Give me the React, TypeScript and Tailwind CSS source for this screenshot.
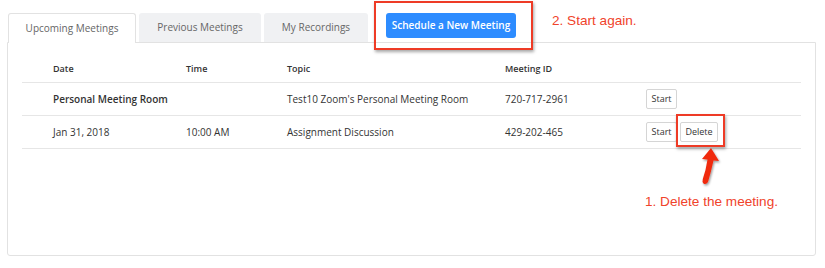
import React from "react";

const rows = [
  { date: "Personal Meeting Room", time: "", topic: "Test10 Zoom's Personal Meeting Room", id: "720-717-2961", bold: true, del: false },
  { date: "Jan 31, 2018", time: "10:00 AM", topic: "Assignment Discussion", id: "429-202-465", bold: false, del: true },
];

const cols = "grid grid-cols-[133px_101px_218px_141px_1fr] pl-[31px] items-center";

export default function App() {
  return (
    <div className="relative w-[825px] h-[268px] bg-white font-['Open_Sans',sans-serif] text-[#333]">
      {/* tabs */}
      <div className="flex items-start pt-[13px] pl-[8px] h-[43px]">
        <div className="w-[128px] h-[30px] bg-white border border-b-0 border-[#e2e2e2] rounded-t-[3px] flex items-center justify-center text-[10px] text-[#666] relative z-10">
          Upcoming Meetings
        </div>
        <div className="ml-[3px] w-[122px] h-[29px] bg-[#f0f1f3] rounded-t-[3px] flex items-center justify-center text-[10px] text-[#666]">
          Previous Meetings
        </div>
        <div className="ml-[3px] w-[104px] h-[29px] bg-[#f0f1f3] rounded-t-[3px] flex items-center justify-center text-[10px] text-[#666]">
          My Recordings
        </div>
        <button className="ml-[18px] w-[130px] h-[25px] bg-[#2d8cff] rounded-[3px] text-white text-[10px] font-semibold whitespace-nowrap">
          Schedule a New Meeting
        </button>
      </div>

      {/* panel */}
      <div className="ml-[7px] -mt-px w-[809px] h-[214px] border border-[#e2e2e2] rounded-b-[3px] px-[14px]">
        <div className={`${cols} h-[40px] pt-[13px] border-b border-[#e6e6e6] text-[9px] font-semibold text-[#333]`}>
          <div>Date</div>
          <div>Time</div>
          <div>Topic</div>
          <div>Meeting ID</div>
          <div />
        </div>
        {rows.map((r) => (
          <div key={r.id} className={`${cols} h-[33px] border-b border-[#e6e6e6] text-[10px]`}>
            <div className={r.bold ? "font-semibold" : ""}>{r.date}</div>
            <div>{r.time}</div>
            <div>{r.topic}</div>
            <div>{r.id}</div>
            <div className="flex gap-[3px]">
              <button className="w-[31px] h-[20px] border border-[#d5d5d5] rounded-[2px] bg-white text-[9px] text-[#333]">Start</button>
              {r.del && (
                <button className="w-[38px] h-[20px] border border-[#d5d5d5] rounded-[2px] bg-white text-[9px] text-[#333]">Delete</button>
              )}
            </div>
          </div>
        ))}
      </div>

      {/* annotations */}
      <div className="absolute left-[374px] top-[1px] w-[159px] h-[49px] border-2 border-[#ee3b26] shadow-[1px_2px_3px_rgba(0,0,0,0.35)]" />
      <div className="absolute left-[552px] top-[11px] text-[13.6px] text-[#f0432b] font-['Liberation_Sans',sans-serif]">
        2. Start again.
      </div>
      <div className="absolute left-[676px] top-[114px] w-[49px] h-[33px] border-2 border-[#ee3b26] shadow-[1px_2px_3px_rgba(0,0,0,0.35)]" />
      <svg className="absolute left-[690px] top-[144px]" width="36" height="46" viewBox="0 0 36 46">
        <defs>
          <filter id="sh" x="-50%" y="-50%" width="200%" height="200%">
            <feDropShadow dx="1" dy="1.5" stdDeviation="1.2" floodColor="#000" floodOpacity="0.4" />
          </filter>
        </defs>
        <path
          d="M21 4 L29 17 L23.5 16.5 Q21 28 18 38 Q16 41 13.5 39.5 Q12 38 12.8 35 Q16 26 17.5 15.5 L12 15 Z"
          fill="#f0290f"
          filter="url(#sh)"
        />
      </svg>
      <div className="absolute left-[645px] top-[192px] text-[13.6px] text-[#f0432b] font-['Liberation_Sans',sans-serif]">
        1. Delete the meeting.
      </div>
    </div>
  );
}
